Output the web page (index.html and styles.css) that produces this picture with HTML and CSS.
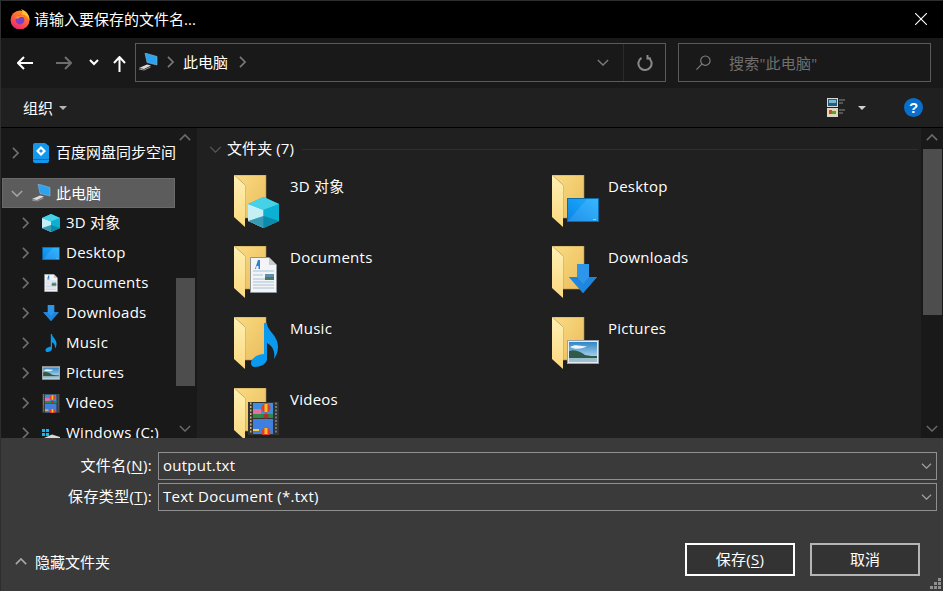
FILE: index.html
```html
<!DOCTYPE html>
<html lang="zh-CN">
<head>
<meta charset="utf-8">
<title>请输入要保存的文件名...</title>
<link rel="stylesheet" href="styles.css">
</head>
<body>
<svg class="defs" width="0" height="0" aria-hidden="true">
  <defs>
    <linearGradient id="fback" x1="0" y1="0" x2="1" y2="1"><stop offset="0" stop-color="#fbdc82"/><stop offset="1" stop-color="#e9bc5c"/></linearGradient>
    <linearGradient id="fflap" x1="0" y1="0" x2="0" y2="1"><stop offset="0" stop-color="#fff0b4"/><stop offset="1" stop-color="#fbd97f"/></linearGradient>
    <linearGradient id="blue" x1="0" y1="1" x2="1" y2="0"><stop offset="0" stop-color="#0a84e8"/><stop offset="1" stop-color="#1fb0ff"/></linearGradient>
    <linearGradient id="sky" x1="0" y1="0" x2="0" y2="1"><stop offset="0" stop-color="#2f86c6"/><stop offset="1" stop-color="#d5ecf6"/></linearGradient>
    <linearGradient id="ffx" x1="0.800" y1="0" x2="0.300" y2="1"><stop offset="0" stop-color="#ff9a1f"/><stop offset="0.550" stop-color="#ff5a3c"/><stop offset="1" stop-color="#e6247e"/></linearGradient>

    <symbol id="i-folder" viewBox="0 0 34 54">
      <path d="M1 0H33V43H12V10Z" fill="url(#fback)" stroke="#a98d56" stroke-width=".6"/>
      <path d="M1 0L12 10V52L1 42Z" fill="url(#fflap)"/>
    </symbol>

    <symbol id="i-cube" viewBox="0 0 31 31">
      <path d="M15.500 0L31 7V24L15.500 31L0 24V7Z" fill="#17b6d5"/>
      <path d="M0 7L15.500 13V31L0 24Z" fill="#c4eff4"/>
      <path d="M15.500 0L31 7L15.500 13L0 7Z" fill="#46d2e6"/>
      <path d="M31 7V24L15.500 31V13Z" fill="#0cb0d2"/>
      <path d="M0 24L15.500 19L31 24L15.500 31Z" fill="#0a7f9e" opacity=".75"/>
    </symbol>

    <symbol id="i-screen" viewBox="0 0 32 24">
      <rect x=".5" y=".5" width="31" height="23" fill="url(#blue)" stroke="#0f6aa8"/>
      <path d="M1 23L20 1H31V23Z" fill="#fff" opacity=".1"/>
      <rect x="26" y="21" width="3" height="1" fill="#8fd0ff"/>
    </symbol>

    <symbol id="i-doc" viewBox="0 0 27 36">
      <path d="M.5.5H19L26.500 8V35.500H.5Z" fill="#f2f4f6" stroke="#8f9296"/>
      <path d="M19 .5V8H26.500Z" fill="#c9ccd0"/>
      <path d="M5 12L8 3H10V12H8.500V9H6.500L6 12Z" fill="#2f7fd0"/>
      <path d="M3 14H24M3 22H24M3 25H24M3 28H24M3 31H24M3 18H13" stroke="#a9c2d8" stroke-width="1"/>
      <rect x="15" y="17" width="9" height="6" fill="#5c8fb0"/>
      <rect x="15" y="20" width="9" height="3" fill="#4d7a5c"/>
    </symbol>

    <symbol id="i-down" viewBox="0 0 28 29">
      <path d="M8 0H20V13H28L14 29L0 13H8Z" fill="#2e96ea"/>
      <path d="M14 29L0 13H8L14 20L20 13H28Z" fill="#1f86dd"/>
    </symbol>

    <symbol id="i-note" viewBox="0 0 27 44">
      <path d="M13 0H16C16 8 27 12 27 24C27 29 25 33 23 36C24 30 23 24 16 20V36C16 41 9 44 4 44C1 44 0 42 0 40C0 35 7 31 13 31Z" fill="#0a9bf0"/>
    </symbol>

    <symbol id="i-pic" viewBox="0 0 32 24">
      <rect x=".5" y=".5" width="31" height="23" fill="#e8ecef" stroke="#9aa0a5"/>
      <rect x="2" y="2" width="28" height="20" fill="url(#sky)"/>
      <path d="M3 7C9 3 14 7 20 6C16 9 8 10 3 7Z" fill="#fff" opacity=".9"/>
      <path d="M2 11C8 9 14 12 18 15C22 16 27 16 30 16V18H2Z" fill="#2f5c4a"/>
      <rect x="2" y="18" width="28" height="4" fill="#9cc0d0"/>
    </symbol>

    <symbol id="i-film" viewBox="0 0 31 33">
      <rect width="31" height="33" fill="#333"/>
      <rect x="5" y="1" width="20" height="15" fill="#3e8fe0"/>
      <rect x="5" y="17" width="20" height="15" fill="#3e7fe0"/>
      <rect x="5" y="12" width="20" height="4" fill="#2e8a46"/>
      <rect x="5" y="7" width="8" height="5" fill="#e86fa0"/>
      <circle cx="18" cy="6" r="4.500" fill="#e23c2c"/>
      <rect x="16.500" y="2" width="3" height="8" fill="#f4c020"/>
      <circle cx="18" cy="14" r="2.500" fill="#b03030"/>
      <circle cx="18" cy="30" r="4.500" fill="#e23c2c"/>
      <rect x="16.500" y="26" width="3" height="6" fill="#f4c020"/>
      <rect x="5" y="27" width="6" height="2" fill="#f4d040"/>
      <path d="M2 1.500H3.500M2 5H3.500M2 8.500H3.500M2 12H3.500M2 15.500H3.500M2 19H3.500M2 22.500H3.500M2 26H3.500M2 29.500H3.500" stroke="#c9b67c" stroke-width="2"/>
      <path d="M27 1.500H29M27 5H29M27 8.500H29M27 12H29M27 15.500H29M27 19H29M27 22.500H29M27 26H29M27 29.500H29" stroke="#777" stroke-width="2"/>
    </symbol>

    <symbol id="i-pc" viewBox="0 0 19 18">
      <path d="M6 0L18 3.500V12L8 9.500Z" fill="#2ba3ee" stroke="#89b9d6" stroke-width=".6"/>
      <path d="M0 15L8 11.500L12 12.500L5 16Z" fill="#dcdcdc"/>
      <path d="M0 15.500L5 16.500L11.500 13.500V14.500L5 17.500L0 16.500Z" fill="#9a9a9a"/>
    </symbol>

    <symbol id="i-baidu" viewBox="0 0 16 20">
      <path d="M2 0H12L16 3V18Q16 20 14 20H2Q0 20 0 18V2Q0 0 2 0Z" fill="#1396ee"/>
      <path d="M8 3L13 8L8 13L3 8ZM8 6L6 8L8 10L10 8Z" fill="#fff" fill-rule="evenodd"/>
      <rect y="16" width="16" height="1" fill="#0b6fb8"/>
    </symbol>

    <symbol id="i-win" viewBox="0 0 20 11">
      <path d="M1 0H4V3H1ZM5 0H8V3H5ZM1 4H4V7H1ZM5 4H8V7H5Z" fill="#12b6f0"/>
      <path d="M3 9L11 5.500L19 8V11H3Z" fill="#d8d8d8"/>
    </symbol>

    <symbol id="i-chev-r" viewBox="0 0 8 14"><path d="M1 1L7 7L1 13" fill="none" stroke="currentColor" stroke-width="1.900"/></symbol>
    <symbol id="i-chev-d" viewBox="0 0 14 8"><path d="M1 1L7 7L13 1" fill="none" stroke="currentColor" stroke-width="1.600"/></symbol>
    <symbol id="i-chev-u" viewBox="0 0 14 8"><path d="M1 7L7 1L13 7" fill="none" stroke="currentColor" stroke-width="1.900"/></symbol>
  </defs>
</svg>

<div class="dialog">
  <header class="titlebar">
    <svg class="ff" viewBox="0 0 20 20" width="20" height="20">
      <circle cx="10" cy="11" r="9.500" fill="url(#ffx)"/>
      <path d="M11 0C17 2 20 7 19.500 12C18 7.500 15 5 12 5.500C13 3.500 12.500 1.500 11 0Z" fill="#ffc22e"/>
      <circle cx="10" cy="11" r="4.400" fill="#7a3ec8"/>
      <path d="M5 9C7 6 12 5.500 14.500 8.500C12 7.500 9 8 8 10Z" fill="#ff8a24"/>
    </svg>
    <span class="title-text">请输入要保存的文件名...</span>
    <svg class="close" viewBox="0 0 12 12" width="12" height="12"><path d="M0 0L12 12M12 0L0 12" stroke="#fff" stroke-width="1.100"/></svg>
  </header>

  <nav class="navbar">
    <div class="nav-buttons">
      <svg class="nav-back" viewBox="0 0 16 14" width="16" height="14"><path d="M7 1L1 7L7 13M1 7H16" fill="none" stroke="#fff" stroke-width="2"/></svg>
      <svg class="nav-fwd" viewBox="0 0 16 14" width="16" height="14"><path d="M9 1L15 7L9 13M15 7H0" fill="none" stroke="#6e6e6e" stroke-width="2"/></svg>
      <svg class="nav-more" viewBox="0 0 10 7" width="10" height="7"><path d="M1 1L5 5L9 1" fill="none" stroke="#fff" stroke-width="2"/></svg>
      <svg class="nav-up" viewBox="0 0 13 16" width="13" height="16"><path d="M1 7L6.500 1L12 7M6.500 1V16" fill="none" stroke="#fff" stroke-width="2"/></svg>
    </div>
    <div class="address">
      <svg class="addr-pc" width="19" height="18"><use href="#i-pc"/></svg>
      <svg class="crumb" width="7" height="12"><use href="#i-chev-r"/></svg>
      <span class="addr-text">此电脑</span>
      <svg class="crumb" width="7" height="12"><use href="#i-chev-r"/></svg>
      <svg class="addr-drop" width="12" height="7"><use href="#i-chev-d"/></svg>
      <span class="addr-refresh">
        <svg viewBox="0 0 16 16" width="16" height="16"><path d="M10.500 2.300A6.600 6.600 0 1 1 4.500 2.800M10.500 0V3.500H14" fill="none" stroke="#8a8a8a" stroke-width="2"/></svg>
      </span>
    </div>
    <div class="search">
      <svg viewBox="0 0 16 16" width="15" height="15"><circle cx="10" cy="6" r="5" fill="none" stroke="#808080" stroke-width="1.200"/><path d="M6.500 9.500L.5 15.500" stroke="#808080" stroke-width="1.200"/></svg>
      <span class="search-text">搜索"此电脑"</span>
    </div>
  </nav>

  <div class="toolbar">
    <span class="org">组织</span>
    <span class="tri"></span>
    <span class="toolbar-gap"></span>
    <svg class="view-icon" viewBox="0 0 18 19" width="18" height="19">
      <rect x=".5" y=".5" width="10" height="8" fill="#1f5f80" stroke="#d8d8d8"/>
      <rect x="2" y="2" width="7" height="3" fill="#7fb6cf"/>
      <rect x=".5" y="10.500" width="10" height="8" fill="#e6d9a0" stroke="#d8d8d8"/>
      <rect x="2" y="12" width="3" height="4" fill="#c84a30"/>
      <rect x="5" y="13" width="4" height="3" fill="#5a9e44"/>
      <path d="M12 2H18M12 5H16M12 12H18M12 15H16" stroke="#8a8a8a"/>
    </svg>
    <span class="tri tri-view"></span>
    <span class="help">?</span>
  </div>

  <div class="body">
    <aside class="side">
      <div class="tree">
        <div class="row row-top">
          <svg class="row-chev" width="7" height="12"><use href="#i-chev-r"/></svg>
          <svg class="row-icon" width="16" height="20"><use href="#i-baidu"/></svg>
          <span class="row-label">百度网盘同步空间</span>
        </div>
        <div class="row row-sel">
          <svg class="row-chev" width="12" height="7"><use href="#i-chev-d"/></svg>
          <svg class="row-icon" width="19" height="18"><use href="#i-pc"/></svg>
          <span>此电脑</span>
        </div>
        <div class="row row-sub">
          <svg class="row-chev" width="7" height="12"><use href="#i-chev-r"/></svg>
          <svg class="row-icon" width="18" height="18"><use href="#i-cube"/></svg>
          <span class="row-label en">3D 对象</span>
        </div>
        <div class="row row-sub">
          <svg class="row-chev" width="7" height="12"><use href="#i-chev-r"/></svg>
          <svg class="row-icon" width="18" height="13"><use href="#i-screen"/></svg>
          <span class="row-label en">Desktop</span>
        </div>
        <div class="row row-sub">
          <svg class="row-chev" width="7" height="12"><use href="#i-chev-r"/></svg>
          <svg class="row-icon" width="14" height="18"><use href="#i-doc"/></svg>
          <span class="row-label en">Documents</span>
        </div>
        <div class="row row-sub">
          <svg class="row-chev" width="7" height="12"><use href="#i-chev-r"/></svg>
          <svg class="row-icon" width="16" height="16"><use href="#i-down"/></svg>
          <span class="row-label en">Downloads</span>
        </div>
        <div class="row row-sub">
          <svg class="row-chev" width="7" height="12"><use href="#i-chev-r"/></svg>
          <svg class="row-icon" width="12" height="18"><use href="#i-note"/></svg>
          <span class="row-label en">Music</span>
        </div>
        <div class="row row-sub">
          <svg class="row-chev" width="7" height="12"><use href="#i-chev-r"/></svg>
          <svg class="row-icon" width="18" height="14"><use href="#i-pic"/></svg>
          <span class="row-label en">Pictures</span>
        </div>
        <div class="row row-sub">
          <svg class="row-chev" width="7" height="12"><use href="#i-chev-r"/></svg>
          <svg class="row-icon" width="18" height="19"><use href="#i-film"/></svg>
          <span class="row-label en">Videos</span>
        </div>
        <div class="row row-sub">
          <svg class="row-chev" width="7" height="12"><use href="#i-chev-r"/></svg>
          <svg class="row-icon" width="20" height="11"><use href="#i-win"/></svg>
          <span class="row-label en">Windows (C:)</span>
        </div>
      </div>
      <div class="sb sb-side">
        <svg class="sb-arrow" width="12" height="7"><use href="#i-chev-u"/></svg>
        <span class="thumb thumb-side"></span>
        <svg class="sb-arrow sb-end" width="12" height="7"><use href="#i-chev-d"/></svg>
      </div>
    </aside>

    <main class="content">
      <div class="files">
        <div class="group">
          <svg class="group-chev" width="13" height="7"><use href="#i-chev-d"/></svg>
          <span class="group-label">文件夹 (7)</span>
          <span class="group-line"></span>
        </div>
        <div class="grid">
          <div class="item">
            <div class="thumbicon">
              <svg class="folder" width="34" height="54"><use href="#i-folder"/></svg>
              <svg class="over ov-cube" width="31" height="31"><use href="#i-cube"/></svg>
            </div>
            <span class="name en">3D 对象</span>
          </div>
          <div class="item">
            <div class="thumbicon">
              <svg class="folder" width="34" height="54"><use href="#i-folder"/></svg>
              <svg class="over ov-screen" width="32" height="24"><use href="#i-screen"/></svg>
            </div>
            <span class="name en">Desktop</span>
          </div>
          <div class="item">
            <div class="thumbicon">
              <svg class="folder" width="34" height="54"><use href="#i-folder"/></svg>
              <svg class="over ov-doc" width="27" height="36"><use href="#i-doc"/></svg>
            </div>
            <span class="name en">Documents</span>
          </div>
          <div class="item">
            <div class="thumbicon">
              <svg class="folder" width="34" height="54"><use href="#i-folder"/></svg>
              <svg class="over ov-down" width="28" height="29"><use href="#i-down"/></svg>
            </div>
            <span class="name en">Downloads</span>
          </div>
          <div class="item">
            <div class="thumbicon">
              <svg class="folder" width="34" height="54"><use href="#i-folder"/></svg>
              <svg class="over ov-note" width="27" height="44"><use href="#i-note"/></svg>
            </div>
            <span class="name en">Music</span>
          </div>
          <div class="item">
            <div class="thumbicon">
              <svg class="folder" width="34" height="54"><use href="#i-folder"/></svg>
              <svg class="over ov-screen" width="32" height="24"><use href="#i-pic"/></svg>
            </div>
            <span class="name en">Pictures</span>
          </div>
          <div class="item">
            <div class="thumbicon">
              <svg class="folder" width="34" height="54"><use href="#i-folder"/></svg>
              <svg class="over ov-film" width="31" height="33"><use href="#i-film"/></svg>
            </div>
            <span class="name en">Videos</span>
          </div>
        </div>
      </div>
      <div class="sb sb-main">
        <svg class="sb-arrow" width="12" height="7"><use href="#i-chev-u"/></svg>
        <span class="thumb thumb-main"></span>
        <svg class="sb-arrow sb-end" width="12" height="7"><use href="#i-chev-d"/></svg>
      </div>
    </main>
  </div>

  <footer class="footer">
    <div class="field">
      <label class="field-label">文件名(<u>N</u>):</label>
      <div class="combo"><span class="combo-text en">output.txt</span><svg width="11" height="6" class="combo-chev"><use href="#i-chev-d"/></svg></div>
    </div>
    <div class="field field-second">
      <label class="field-label">保存类型(<u>T</u>):</label>
      <div class="combo"><span class="combo-text en">Text Document (*.txt)</span><svg width="11" height="6" class="combo-chev"><use href="#i-chev-d"/></svg></div>
    </div>
    <div class="actions">
      <svg class="hide-chev" width="12" height="7"><use href="#i-chev-u"/></svg>
      <span class="hide-text">隐藏文件夹</span>
      <button class="btn btn-default">保存(<u>S</u>)</button>
      <button class="btn btn-cancel">取消</button>
    </div>
    <svg class="grip" viewBox="0 0 11 11" width="11" height="11"><path d="M8 0h3v3H8zM4 4h3v3H4zM8 4h3v3H8zM0 8h3v3H0zM4 8h3v3H4zM8 8h3v3H8z" fill="#8f8f8f"/></svg>
  </footer>
</div>
</body>
</html>
```
FILE: styles.css
```css
* { box-sizing: border-box; }
html, body { margin: 0; padding: 0; background: #2b2b2b; }
.defs { position: absolute; }
.dialog {
  width: 943px;
  height: 591px;
  display: flex;
  flex-direction: column;
  overflow: hidden;
  position: relative;
  color: #fff;
  font: 15px/20px "Open Sans", "Noto Sans CJK SC", sans-serif;
  border-left: 1px solid #2e2e2e;
  border-top: 1px solid #2e2e2e;
}
svg { flex: none; display: block; }
u { text-underline-offset: 2px; }
.en { letter-spacing: .25px; }

.titlebar {
  height: 37px;
  flex: none;
  background: #000;
  display: flex;
  align-items: center;
  padding-left: 9px;
  padding-right: 16px;
  padding-bottom: 2px;
}
.title-text { margin-left: 4px; flex: 1; }

.navbar {
  height: 50px;
  flex: none;
  background: #191919;
  display: flex;
  align-items: center;
}
.nav-buttons { width: 134px; display: flex; align-items: center; padding-left: 16px; margin-top: -1px; }
.nav-fwd { margin-left: 23px; }
.nav-more { margin-left: 17px; }
.nav-up { margin-left: 14px; margin-top: 3px; }
.address {
  width: 531px;
  height: 39px;
  margin-bottom: 1px;
  border: 1px solid #5a5a5a;
  display: flex;
  align-items: center;
  padding-left: 3px;
}
.addr-pc { margin-top: -1px; }
.crumb { color: #7a7a7a; margin-left: 9px; margin-top: -2px; }
.addr-text { margin-left: 9px; margin-top: -1px; }
.address .addr-text + .crumb { margin-left: 11px; }
.addr-drop { margin-left: auto; color: #7a7a7a; }
.addr-refresh {
  width: 42px;
  height: 37px;
  margin-left: 14px;
  border-left: 1px solid #2a2a2a;
  display: flex;
  align-items: center;
  justify-content: center;
}
.search {
  width: 253px;
  height: 39px;
  margin-left: 12px;
  margin-bottom: 1px;
  border: 1px solid #5a5a5a;
  display: flex;
  align-items: center;
  padding-left: 17px;
}
.search-text { margin-left: 18px; color: #6f6f6f; letter-spacing: .2px; }

.toolbar {
  height: 40px;
  flex: none;
  background: #202020;
  display: flex;
  align-items: center;
  padding-left: 22px;
  border-bottom: 1px solid #000;
}
.tri {
  width: 0;
  height: 0;
  border-left: 4px solid transparent;
  border-right: 4px solid transparent;
  border-top: 4px solid #b5b5b5;
  margin-left: 6px;
}
.toolbar-gap { flex: 1; }
.tri-view { margin-left: 13px; border-top-color: #d0d0d0; }
.help {
  width: 19px;
  height: 19px;
  margin-left: 38px;
  margin-right: 20px;
  border-radius: 50%;
  background: #0a6ecb;
  color: #fff;
  font: bold 15px/19px "Liberation Sans", sans-serif;
  text-align: center;
}

.body { height: 310px; flex: none; display: flex; overflow: hidden; }
.side {
  width: 196px;
  flex: none;
  background: #191919;
  display: flex;
}
.tree { width: 174px; padding-top: 10px; padding-left: 1px; }
.row {
  height: 30px;
  display: flex;
  align-items: center;
  white-space: nowrap;
  position: relative;
  padding-left: 9px;
}
.row-label { margin-top: -2px; }
.row-top { margin-bottom: 10px; }
.row-sel { background: #5c5c5c; outline: 1px solid #6a6a6a; outline-offset: -1px; }
.row-chev { color: #6f6f6f; margin-left: 1px; margin-right: 13px; }
.row-sel .row-chev { color: #a8a8a8; margin-left: 0; margin-right: 9px; }
.row-icon { margin-right: 7px; }
.row-top .row-icon { margin-left: 1px; }
.row-sel .row-icon { margin-right: 5px; }
.row-sub { padding-left: 20px; }
.row-sub .row-chev { margin-left: 0; margin-right: 13px; }
.row-sub .row-icon { width: 18px; margin-right: 6px; }
.row-sub svg[height="11"].row-icon { width: 20px; margin-left: -1px; margin-right: 5px; margin-top: 3px; }

.sb {
  background: #191919;
  display: flex;
  flex-direction: column;
  align-items: center;
  padding-top: 6px;
  padding-bottom: 6px;
  color: #6a6a6a;
}
.sb-side { width: 20px; }
.sb-main { width: 22px; }
.sb-arrow { flex: none; }
.sb-end { margin-top: auto; }
.thumb { display: block; width: 19px; background: #4d4d4d; }
.thumb-side { height: 108px; margin-top: 137px; }
.thumb-main { height: 166px; margin-top: 8px; }

.content { flex: 1; display: flex; background: #202020; min-width: 0; }
.files { flex: 1; padding: 11px 0 0 12px; overflow: hidden; min-width: 0; }
.group {
  display: flex;
  align-items: center;
  height: 20px;
  letter-spacing: .1px;
  margin-right: 3px;
}
.group-label { margin-top: -2px; }
.group-chev { color: #555; margin-right: 5px; }
.group-line { flex: 1; height: 1px; background: #2f2f2f; margin-left: 8px; }
.grid {
  display: grid;
  grid-template-columns: 318px 318px;
  grid-auto-rows: 71px;
  margin-top: 16px;
  margin-left: 24px;
}
.item { display: flex; align-items: flex-start; }
.thumbicon { width: 48px; height: 54px; position: relative; flex: none; }
.name { margin-left: 9px; margin-top: 1px; }
.over { position: absolute; }
.ov-cube { left: 15px; top: 22px; }
.ov-screen { left: 16px; top: 23px; }
.ov-doc { left: 17px; top: 11px; }
.ov-down { left: 18px; top: 18px; }
.ov-note { left: 18px; top: 6px; }
.ov-film { left: 15px; top: 14px; }

.footer {
  flex: 1;
  background: #3a3a3a;
  position: relative;
  padding-top: 14px;
  display: flex;
  flex-direction: column;
}
.field { display: flex; align-items: center; height: 28px; }
.field-second { margin-top: 3px; }
.field-label { width: 151px; text-align: right; letter-spacing: .35px; margin-top: -2px; }
.combo {
  width: 779px;
  height: 28px;
  margin-left: 6px;
  border: 1px solid #8f8f8f;
  display: flex;
  align-items: center;
  padding-left: 4px;
}
.combo-text { margin-top: -2px; }
.combo-chev { margin-left: auto; margin-right: 4px; color: #a0a0a0; }
.actions {
  display: flex;
  align-items: center;
  margin-top: 32px;
  padding-left: 14px;
}
.hide-chev { color: #a8a8a8; margin-top: 4px; }
.hide-text { margin-left: 8px; margin-right: auto; margin-top: 4px; }
.btn {
  width: 110px;
  height: 33px;
  background: #333;
  color: #fff;
  font: inherit;
  padding: 0 0 2px;
}
.btn-default { border: 2px solid #fff; letter-spacing: .3px; }
.btn-cancel { border: 2px solid #b5b5b5; margin-left: 15px; margin-right: 23px; }
.grip { position: absolute; right: 2px; bottom: 2px; }
```
